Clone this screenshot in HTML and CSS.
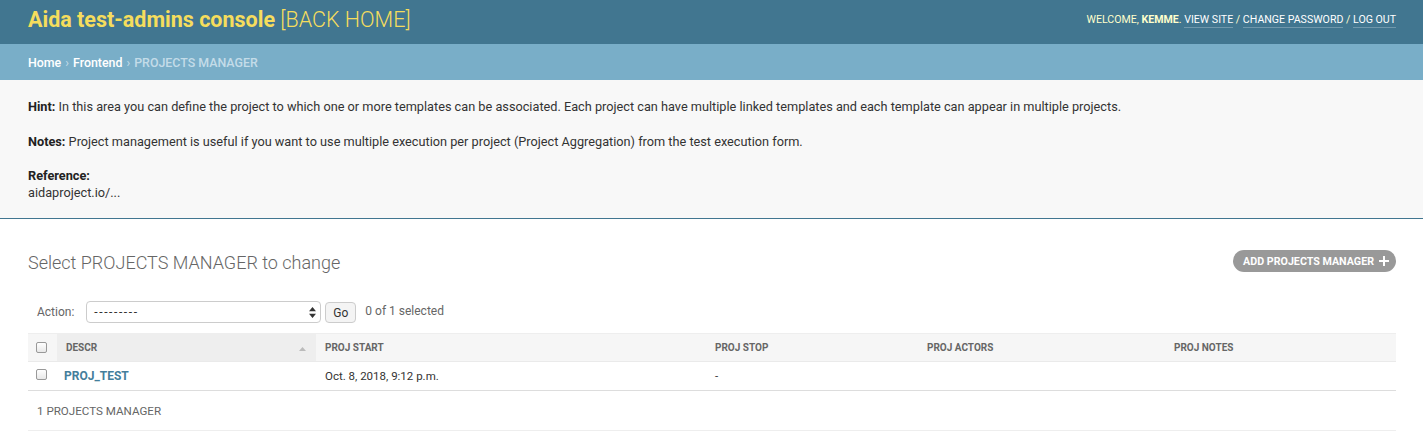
FILE: index.html
```html
<!DOCTYPE html>
<html>
<head>
<meta charset="utf-8">
<link rel="stylesheet" href="styles.css">
</head>
<body>
<header class="header">
  <h1 class="branding"><span class="brand-bold">Aida test-admins console</span> <span class="brand-light">[BACK HOME]</span></h1>
  <div class="user-tools">WELCOME, <strong>KEMME</strong>. <a href="#">VIEW SITE</a> / <a href="#">CHANGE PASSWORD</a> / <a href="#">LOG OUT</a></div>
</header>
<nav class="breadcrumbs"><a href="#">Home</a> › <a href="#">Frontend</a> › <span class="crumb-current">PROJECTS MANAGER</span></nav>
<section class="hint">
  <p><strong>Hint:</strong> In this area you can define the project to which one or more templates can be associated. Each project can have multiple linked templates and each template can appear in multiple projects.</p>
  <p><strong>Notes:</strong> Project management is useful if you want to use multiple execution per project (Project Aggregation) from the test execution form.</p>
  <p><strong>Reference:</strong><br>aidaproject.io/...</p>
</section>
<main class="content">
  <div class="title-row">
    <h2 class="page-title">Select PROJECTS MANAGER to change</h2>
    <a class="addlink" href="#">ADD PROJECTS MANAGER <span class="plus">
      <svg width="10" height="10" viewBox="0 0 10 10"><path d="M4 0h2v4h4v2H6v4H4V6H0V4h4z" fill="#fff"/></svg></span></a>
  </div>
  <div class="actions">
    <label class="action-label">Action:</label>
    <div class="select">
      <span class="dashes">---------</span>
      <svg class="updown" width="7" height="11" viewBox="0 0 7 11"><path d="M3.5 0L7 4.2H0z M3.5 11L0 6.8h7z" fill="#333"/></svg>
    </div>
    <button class="go">Go</button>
    <span class="counter">0 of 1 selected</span>
  </div>
  <table class="results">
    <thead>
      <tr>
        <th class="c-check"><span class="cb"></span></th>
        <th class="c-descr sorted">DESCR <svg class="sortarrow" width="7" height="4" viewBox="0 0 7 4"><path d="M3.5 0L7 4H0z" fill="#bbb"/></svg></th>
        <th class="c-start">PROJ START</th>
        <th class="c-stop">PROJ STOP</th>
        <th class="c-actors">PROJ ACTORS</th>
        <th class="c-notes">PROJ NOTES</th>
      </tr>
    </thead>
    <tbody>
      <tr>
        <td class="c-check"><span class="cb"></span></td>
        <td class="c-descr"><a class="rowlink" href="#">PROJ_TEST</a></td>
        <td>Oct. 8, 2018, 9:12 p.m.</td>
        <td class="dash">-</td>
        <td></td>
        <td></td>
      </tr>
    </tbody>
  </table>
  <p class="paginator">1 PROJECTS MANAGER</p>
</main>
</body>
</html>
```

FILE: styles.css
```css
* { box-sizing: border-box; }
html, body { margin: 0; padding: 0; }
body {
  font-family: Roboto, "Liberation Sans", Arial, sans-serif;
  font-size: 13px;
  color: #333;
  background: #fff;
}
a { text-decoration: none; }

.header {
  height: 44px;
  background: #417690;
  display: flex;
  align-items: center;
  justify-content: space-between;
  padding: 0 27px 0 28px;
}
.branding {
  margin: 0;
  font-size: 21.5px;
  line-height: 24px;
  color: #f5dd5d;
  font-weight: 400;
  margin-top: -5px;
}
.brand-bold { font-weight: 700; }
.brand-light { font-weight: 300; }
.user-tools {
  font-size: 10.6px;
  color: #ffc;
  margin-top: -6px;
}
.user-tools strong { font-weight: 700; }
.user-tools a {
  color: #fff;
  border-bottom: 1px solid rgba(255,255,255,0.25);
  padding-bottom: 1px;
}

.breadcrumbs {
  height: 36px;
  background: #79aec8;
  padding: 0 28px;
  display: flex;
  align-items: center;
  gap: 4px;
  font-size: 12.4px;
  color: #c4dce8;
}
.breadcrumbs a { color: #fff; font-weight: 500; }
.crumb-current { color: #c4dce8; font-weight: 500; }

.hint {
  background: #f8f8f8;
  border-bottom: 1px solid #417690;
  padding: 18px 28px 17px;
  height: 139px;
  font-size: 12.72px;
}
.hint p { margin: 0 0 17.5px; line-height: 17px; }
.hint p:last-child { margin-bottom: 0; }
.hint strong { font-weight: 700; color: #222; }

.content { padding: 0 27px 0 28px; }
.title-row {
  display: flex;
  justify-content: space-between;
  align-items: flex-start;
  padding-top: 31px;
  height: 76px;
}
.page-title {
  margin: 1px 0 0;
  font-size: 18px;
  font-weight: 300;
  color: #666;
  line-height: 24px;
}
.addlink {
  display: flex;
  align-items: center;
  gap: 5px;
  background: #999;
  color: #fff;
  font-size: 10.7px;
  font-weight: 700;
  height: 22px;
  border-radius: 11px;
  padding: 0 7px 0 10px;
}
.plus { display: flex; }

.actions {
  display: flex;
  align-items: center;
  height: 34px;
  padding-left: 9px;
}
.action-label { color: #666; font-size: 12px; margin-right: 12px; }
.select {
  width: 235px;
  height: 22px;
  border: 1px solid #ccc;
  border-radius: 4px;
  background: #fff;
  display: flex;
  align-items: center;
  justify-content: space-between;
  padding: 0 4px 0 7px;
  font-size: 12px;
  color: #333;
}
.dashes { letter-spacing: 1.6px; }
.go {
  margin-left: 4px;
  width: 31px;
  height: 21px;
  border: 1px solid #ccc;
  border-radius: 4px;
  background: #f4f4f4;
  font-family: Roboto, "Liberation Sans", sans-serif;
  font-size: 12px;
  color: #333;
  padding: 0;
  margin-top: 1px;
}
.counter { margin-left: 9px; color: #666; font-size: 12px; margin-top: -3px; }

.results {
  width: 100%;
  border-collapse: collapse;
  margin-top: 4px;
  table-layout: fixed;
}
.results th {
  background: #f6f6f6;
  height: 28px;
  text-align: left;
  font-size: 10px;
  font-weight: 700;
  color: #666;
  padding: 0 9px;
  border-bottom: 1px solid #eaeaea;
  border-top: 1px solid #eee;
}
.results th.sorted { background: #eee; }
.results td {
  height: 29px;
  padding: 0 9px;
  font-size: 11.5px;
  color: #333;
  vertical-align: middle;
  border-bottom: 1px solid #ddd;
}
.results td.c-descr { font-weight: 700; padding-left: 7px; }
.c-check { width: 29px; }
.results .c-check { padding: 0 0 0 8px; }
.c-descr { width: 259px; }
.c-start { width: 390px; }
.c-stop { width: 212px; }
.c-actors { width: 247px; }
.sortarrow { float: right; margin-top: 5px; margin-right: 1px; }
.cb {
  display: inline-block;
  width: 11px;
  height: 11px;
  border: 1px solid #999;
  border-radius: 2px;
  background: linear-gradient(#fff, #e8e8e8);
  vertical-align: middle;
}
.results td .cb { margin-top: -5px; }
.rowlink { color: #447e9b; font-size: 12px; }

.paginator {
  margin: 0;
  height: 40px;
  padding: 0 9px;
  display: flex;
  align-items: center;
  font-size: 11.6px;
  color: #666;
  border-bottom: 1px solid #eee;
}
```
